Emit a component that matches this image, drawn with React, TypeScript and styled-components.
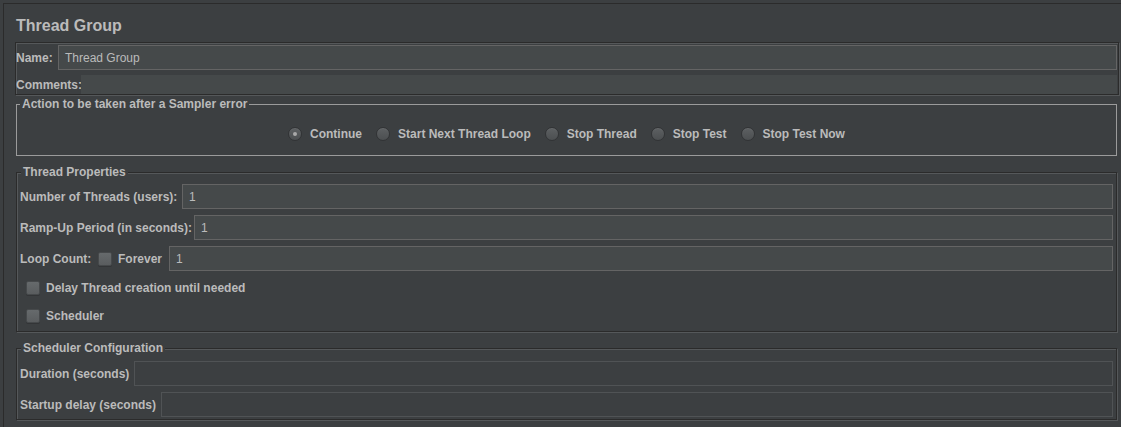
import React from "react";
import styled, { createGlobalStyle, css } from "styled-components";

const GlobalStyle = createGlobalStyle`
  html, body { margin: 0; padding: 0; background: #3c3f41; }
  body {
    font-family: "Liberation Sans", Arial, sans-serif;
    font-size: 12px;
    color: #bbbbbb;
  }
  * { box-sizing: border-box; }
`;

const Frame = styled.div`
  margin: 3px 0 0 3px;
  border-top: 1px solid #2b2b2b;
  border-left: 1px solid #2b2b2b;
  height: 424px;
  padding: 0 2px 0 11px;
  display: flex;
  flex-direction: column;
`;

const Title = styled.h1`
  margin: 12px 0 0 1px;
  font-size: 16px;
  font-weight: bold;
  line-height: 20px;
  color: #bbbbbb;
`;

const etched = css`
  border: 1px solid #2b2b2b;
  box-shadow: 1px 1px 0 #55585a, inset 1px 1px 0 #55585a;
`;

const NamePanel = styled.div`
  ${etched};
  margin-top: 6px;
  padding: 2px 1px 0 0;
  display: flex;
  flex-direction: column;
  gap: 5px;
`;

const Row = styled.div`
  display: flex;
  align-items: center;
`;

const Label = styled.label<{ $w?: number }>`
  flex: none;
  width: ${(p) => (p.$w ? `${p.$w}px` : "auto")};
  font-weight: bold;
  white-space: nowrap;
  line-height: 14px;
  color: #bbbbbb;
`;

const TextField = styled.div<{ $disabled?: boolean }>`
  flex: 1;
  height: 25px;
  display: flex;
  align-items: center;
  padding: 0 6px;
  border: 1px solid ${(p) => (p.$disabled ? "#505355" : "#646464")};
  background: ${(p) => (p.$disabled ? "#3c3f41" : "#45494a")};
  color: #bbbbbb;
  font-size: 12px;
`;

const CommentsBox = styled.div`
  flex: 1;
  height: 19px;
  background: #45494a;
`;

const Group = styled.div<{ $tone: "light" | "etched"; $mt: number }>`
  position: relative;
  margin: ${(p) => p.$mt}px 2px 0 1px;
  ${(p) =>
    p.$tone === "light"
      ? css`
          border: 1px solid #9b9b9b;
        `
      : etched};
`;

const Legend = styled.span<{ $left: number }>`
  position: absolute;
  top: -8px;
  left: ${(p) => p.$left}px;
  padding: 0 2px;
  background: #3c3f41;
  font-weight: bold;
  line-height: 14px;
  color: #bbbbbb;
  white-space: nowrap;
`;

const RadioRow = styled.div`
  display: flex;
  justify-content: center;
  align-items: center;
  gap: 14px;
  height: 18px;
  margin: 20px 0 12px;
`;

const RadioItem = styled.div`
  display: flex;
  align-items: center;
  gap: 8px;
  font-weight: bold;
  white-space: nowrap;
`;

const RadioDot = styled.span<{ $checked?: boolean }>`
  width: 14px;
  height: 14px;
  border-radius: 50%;
  border: 1px solid #313335;
  background: linear-gradient(#5d6062, #4c4f51);
  box-shadow: inset 0 1px 0 rgba(255, 255, 255, 0.06);
  display: grid;
  place-items: center;
  &::after {
    content: "";
    width: 4px;
    height: 4px;
    border-radius: 50%;
    background: ${(p) => (p.$checked ? "#a9a9a9" : "transparent")};
  }
`;

const Stack = styled.div<{ $pad: string }>`
  display: flex;
  flex-direction: column;
  gap: 6px;
  padding: ${(p) => p.$pad};
`;

const CheckRow = styled.div<{ $indent?: number }>`
  display: flex;
  align-items: center;
  height: 22px;
  padding-left: ${(p) => p.$indent ?? 0}px;
  font-weight: bold;
  white-space: nowrap;
`;

const Box = styled.span`
  flex: none;
  width: 14px;
  height: 14px;
  margin-right: 6px;
  border: 1px solid #46494b;
  border-radius: 2px;
  background: linear-gradient(#666a6c, #5a5d5f);
  box-shadow: 0 1px 0 #333537;
`;

const radios = [
  { label: "Continue", checked: true },
  { label: "Start Next Thread Loop" },
  { label: "Stop Thread" },
  { label: "Stop Test" },
  { label: "Stop Test Now" },
];

export default function App() {
  return (
    <>
      <GlobalStyle />
      <Frame>
        <Title>Thread Group</Title>
        <NamePanel>
          <Row>
            <Label $w={42}>Name:</Label>
            <TextField>Thread Group</TextField>
          </Row>
          <Row>
            <Label $w={65}>Comments:</Label>
            <CommentsBox />
          </Row>
        </NamePanel>

        <Group $tone="light" $mt={9}>
          <Legend $left={3}>Action to be taken after a Sampler error</Legend>
          <RadioRow>
            {radios.map((r) => (
              <RadioItem key={r.label}>
                <RadioDot $checked={r.checked} />
                {r.label}
              </RadioItem>
            ))}
          </RadioRow>
        </Group>

        <Group $tone="etched" $mt={16}>
          <Legend $left={4}>Thread Properties</Legend>
          <Stack $pad="11px 3px 4px 3px">
            <Row>
              <Label $w={162}>Number of Threads (users):</Label>
              <TextField>1</TextField>
            </Row>
            <Row>
              <Label $w={174}>Ramp-Up Period (in seconds):</Label>
              <TextField>1</TextField>
            </Row>
            <Row>
              <Label $w={78}>Loop Count:</Label>
              <Box />
              <Label $w={51}>Forever</Label>
              <TextField>1</TextField>
            </Row>
            <CheckRow $indent={6}>
              <Box />
              Delay Thread creation until needed
            </CheckRow>
            <CheckRow $indent={6}>
              <Box />
              Scheduler
            </CheckRow>
          </Stack>
        </Group>

        <Group $tone="etched" $mt={16}>
          <Legend $left={4}>Scheduler Configuration</Legend>
          <Stack $pad="12px 3px 2px 3px">
            <Row>
              <Label $w={114}>Duration (seconds)</Label>
              <TextField $disabled />
            </Row>
            <Row>
              <Label $w={141}>Startup delay (seconds)</Label>
              <TextField $disabled />
            </Row>
          </Stack>
        </Group>
      </Frame>
    </>
  );
}
